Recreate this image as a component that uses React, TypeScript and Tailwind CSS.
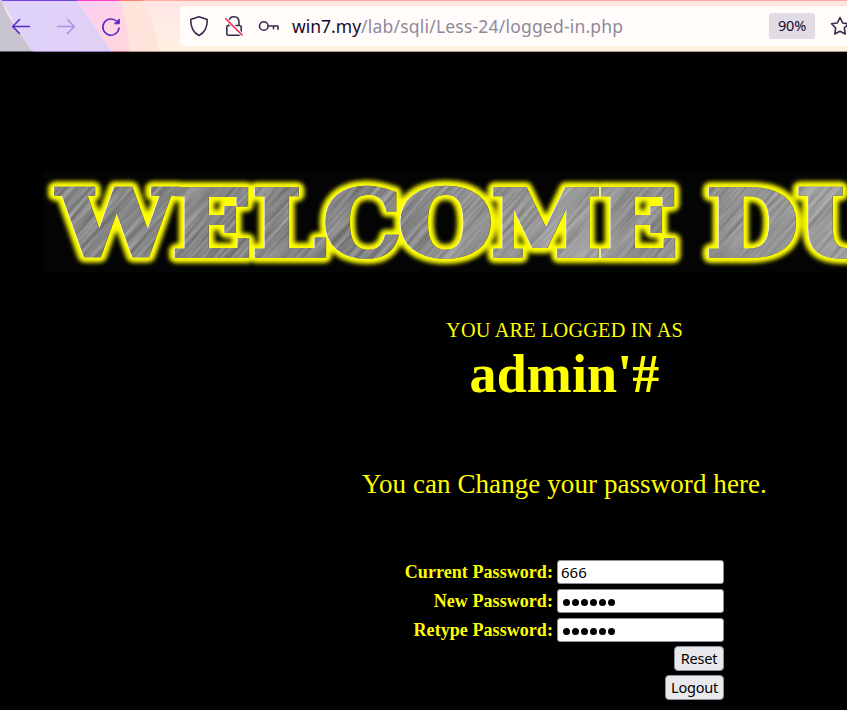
import React from "react";

type Letter = { ch: string; x: number; w: number };

const LETTERS: Letter[] = [
  { ch: "W", x: 14, w: 119 },
  { ch: "E", x: 129, w: 80 },
  { ch: "L", x: 209, w: 74 },
  { ch: "C", x: 280, w: 78 },
  { ch: "O", x: 355, w: 95 },
  { ch: "M", x: 448, w: 110 },
  { ch: "E", x: 555, w: 80 },
  { ch: "D", x: 663, w: 92 },
  { ch: "U", x: 754, w: 92 },
];

function Word() {
  return (
    <>
      {LETTERS.map((l, i) => (
        <text key={i} x={l.x} y={85} textLength={l.w} lengthAdjust="spacingAndGlyphs">
          {l.ch}
        </text>
      ))}
    </>
  );
}

function Banner() {
  return (
    <svg
      width="1044"
      height="102"
      viewBox="0 0 1044 102"
      fontSize="92"
      className="block shrink-0 overflow-visible bg-[#040404] font-['DejaVu_Serif'] font-bold"
    >
      <defs>
        <filter id="glow" x="-5%" y="-20%" width="110%" height="140%">
          <feGaussianBlur stdDeviation="1.9" />
        </filter>
        <filter id="brush" x="0" y="0" width="100%" height="100%" colorInterpolationFilters="sRGB">
          <feTurbulence type="fractalNoise" baseFrequency="0.014 0.3" numOctaves="2" seed="4" />
          <feColorMatrix values="0.36 0 0 0 0.335  0.36 0 0 0 0.335  0.36 0 0 0 0.34  0 0 0 0 1" />
        </filter>
        <linearGradient id="shine" x1="0" x2="1" y1="0" y2="0">
          <stop offset="0" stopColor="#fff" stopOpacity="0.02" />
          <stop offset="0.3" stopColor="#fff" stopOpacity="0.02" />
          <stop offset="0.52" stopColor="#fff" stopOpacity="0.2" />
          <stop offset="0.62" stopColor="#fff" stopOpacity="0.06" />
          <stop offset="0.75" stopColor="#fff" stopOpacity="0.2" />
          <stop offset="1" stopColor="#fff" stopOpacity="0.12" />
        </linearGradient>
        <mask id="face" maskUnits="userSpaceOnUse" x="0" y="0" width="1044" height="102">
          <g fill="#fff" stroke="#fff" strokeWidth="3.6">
            <Word />
          </g>
        </mask>
      </defs>
      <g fill="#ff0" stroke="#ff0" strokeWidth="14" strokeLinejoin="round" filter="url(#glow)">
        <Word />
      </g>
      <g fill="#fffde0" stroke="#fffde0" strokeWidth="3.6" transform="translate(-0.7 -0.5)">
        <Word />
      </g>
      <g fill="#65651c" stroke="#65651c" strokeWidth="3.6" transform="translate(0.5 0.4)">
        <Word />
      </g>
      <g mask="url(#face)">
        <g transform="rotate(-48 420 50)">
          <rect x="-100" y="-500" width="1100" height="1100" filter="url(#brush)" />
        </g>
        <rect width="1044" height="102" fill="url(#shine)" />
      </g>
    </svg>
  );
}

function Toolbar() {
  return (
    <div className="relative flex h-[52px] w-full items-center overflow-hidden bg-[#fff0e4]">
      <svg className="absolute inset-0" width="847" height="52">
        <defs>
          <linearGradient id="warm" x1="0" x2="0" y1="0" y2="1">
            <stop offset="0" stopColor="#ffe5e4" />
            <stop offset="1" stopColor="#fff2e2" />
          </linearGradient>
          <linearGradient id="violet" x1="0" x2="1" y1="0" y2="0">
            <stop offset="0" stopColor="#ded2fb" />
            <stop offset="1" stopColor="#e0d0f5" />
          </linearGradient>
          <linearGradient id="pink" x1="0" x2="1" y1="0" y2="1">
            <stop offset="0" stopColor="#ffcff2" />
            <stop offset="1" stopColor="#ffd6dc" />
          </linearGradient>
        </defs>
        <rect width="847" height="52" fill="url(#warm)" />
        <path d="M119 0H143C152 16 157 32 159 52H119Z" fill="#ffe4dc" />
        <path d="M77 0H119C126 17 129 34 130 52H112Z" fill="url(#pink)" />
        <path d="M2 0H77L112 52H33L15 25Z" fill="url(#violet)" />
        <path d="M0 0H2C5 11 9 17 15 26L33 52H0Z" fill="#c8c5cf" />
        <path d="M2 .5H77" stroke="#7542e5" />
        <path d="M77 .5H119" stroke="#ff3fcc" />
        <path d="M119 .5H143" stroke="#ff8270" />
        <path d="M143 .5H847" stroke="#ffa99f" />
        <path d="M0 51.5H33" stroke="#605b68" />
        <path d="M33 51.5H112" stroke="#9a79bb" />
        <path d="M112 51.5H130" stroke="#bc7380" />
        <path d="M130 51.5H847" stroke="#b09281" />
      </svg>
      <div className="relative flex w-[180px] shrink-0 items-center">
        <svg width="180" height="52" fill="none" stroke="#592acb" strokeWidth="1.6" strokeLinecap="round" strokeLinejoin="round">
          <path d="M29.5 26.5H13M19.5 19.5L12.7 26.5L19.5 33.5" />
          <path d="M57.5 26.5H74M67.5 19.5L74.3 26.5L67.5 33.5" stroke="#ae91e6" />
          <path d="M119 28A8.1 8.1 0 1 1 116.6 21.3" />
          <path d="M119.3 19.3V23.8H114.8Z" fill="#592acb" strokeWidth="1" />
        </svg>
      </div>
      <div className="relative flex h-10 w-[700px] shrink-0 items-center rounded-[4px] bg-[#fffcfa]">
        <svg className="shrink-0" width="112" height="40" fill="none" stroke="#352d4d" strokeWidth="1.6" strokeLinecap="round" strokeLinejoin="round">
          <path d="M19 10.7L27.3 13.6C27.3 21 25.5 26.7 19 29.4C12.5 26.7 10.7 21 10.7 13.6Z" />
          <path d="M49 19V15.5C49 12 51 10.7 54 10.7S59 12.5 59 16V19M50.5 19.5H48.5Q46.8 19.5 46.8 21V27.5Q46.8 29.2 48.5 29.2H59.5Q61.2 29.2 61.2 27.5V21Q61.2 19.5 59.5 19.5H56" />
          <path d="M46 13L62 29" stroke="#fffcfa" strokeWidth="3.5" />
          <path d="M45.8 12.8L62 29" stroke="#f02355" />
          <circle cx="83.8" cy="20" r="4.3" />
          <path d="M88.3 20H98V23.3M93.5 20V22.8" />
        </svg>
        <div className="w-[477px] shrink-0 whitespace-nowrap font-['Noto_Sans'] text-[17.5px] leading-10 tracking-[0.2px] text-[#8f889d]">
          <span className="tracking-normal text-[#15082f]">win7.my</span>/lab/sqli/Less-24/logged-in.php
        </div>
        <div className="flex h-[26px] w-[46px] shrink-0 items-center justify-center rounded-[3px] bg-[#e1dce3] pb-px font-['Noto_Sans'] text-[14.5px] tracking-[-0.2px] text-[#15082f]">
          90%
        </div>
        <svg className="ml-[15px] shrink-0" width="20" height="20" fill="none" stroke="#352d4d" strokeWidth="1.6" strokeLinejoin="round">
          <path d="M10 1.5L12.7 7L18.5 7.8L14.3 12L15.3 18L10 15.2L4.7 18L5.7 12L1.5 7.8L7.3 7Z" />
        </svg>
      </div>
    </div>
  );
}

function Field({ label, value, type = "text" }: { label: string; value: string; type?: string }) {
  return (
    <div className="flex h-[25px] items-end justify-end gap-1">
      <label className="whitespace-nowrap pb-px text-[18px] font-bold leading-[21px] tracking-[0.06px]">{label}</label>
      {type === "password" ? (
        <div className="flex h-6 w-[167px] items-center gap-[2.2px] rounded-[3px] border border-[#8f8f9d] bg-white pl-[4.5px] pt-[3px]">
          {value.split("").map((_, i) => (
            <span key={i} className="size-[7px] rounded-full bg-black" />
          ))}
        </div>
      ) : (
        <input
          type="text"
          defaultValue={value}
          className="h-6 w-[167px] rounded-[3px] border border-[#8f8f9d] bg-white px-[3px] font-['Noto_Sans'] text-[15px] text-black outline-none"
        />
      )}
    </div>
  );
}

function ActionButton({ children, className }: { children: string; className: string }) {
  return (
    <button
      className={`flex h-[25px] items-center justify-center rounded-[4px] border border-[#8f8f9d] bg-[#e9e9ed] font-['Noto_Sans'] text-[14.5px] tracking-[-0.25px] text-black ${className}`}
    >
      {children}
    </button>
  );
}

export default function App() {
  return (
    <div className="h-[710px] w-[847px] overflow-hidden bg-black font-['Liberation_Serif',serif] text-[#ff0]">
      <Toolbar />
      <div className="flex w-[1129px] flex-col items-center pt-[119px]">
        <Banner />
        <div className="mt-[45px] text-[20.25px] leading-6 tracking-[0.2px]">YOU ARE LOGGED IN AS</div>
        <div className="mt-px text-[54px] font-bold leading-[62px] tracking-[0.1px]">admin'#</div>
        <div className="mt-[64px] text-[27px] leading-[31px] tracking-[0.08px]">You can Change your password here.</div>
        <div className="mt-[59px] flex w-[319px] flex-col items-end gap-1">
          <Field label="Current Password:" value="666" />
          <Field label="New Password:" value="666666" type="password" />
          <Field label="Retype Password:" value="666666" type="password" />
          <ActionButton className="w-[50px]">Reset</ActionButton>
          <ActionButton className="w-[59px]">Logout</ActionButton>
        </div>
      </div>
    </div>
  );
}
